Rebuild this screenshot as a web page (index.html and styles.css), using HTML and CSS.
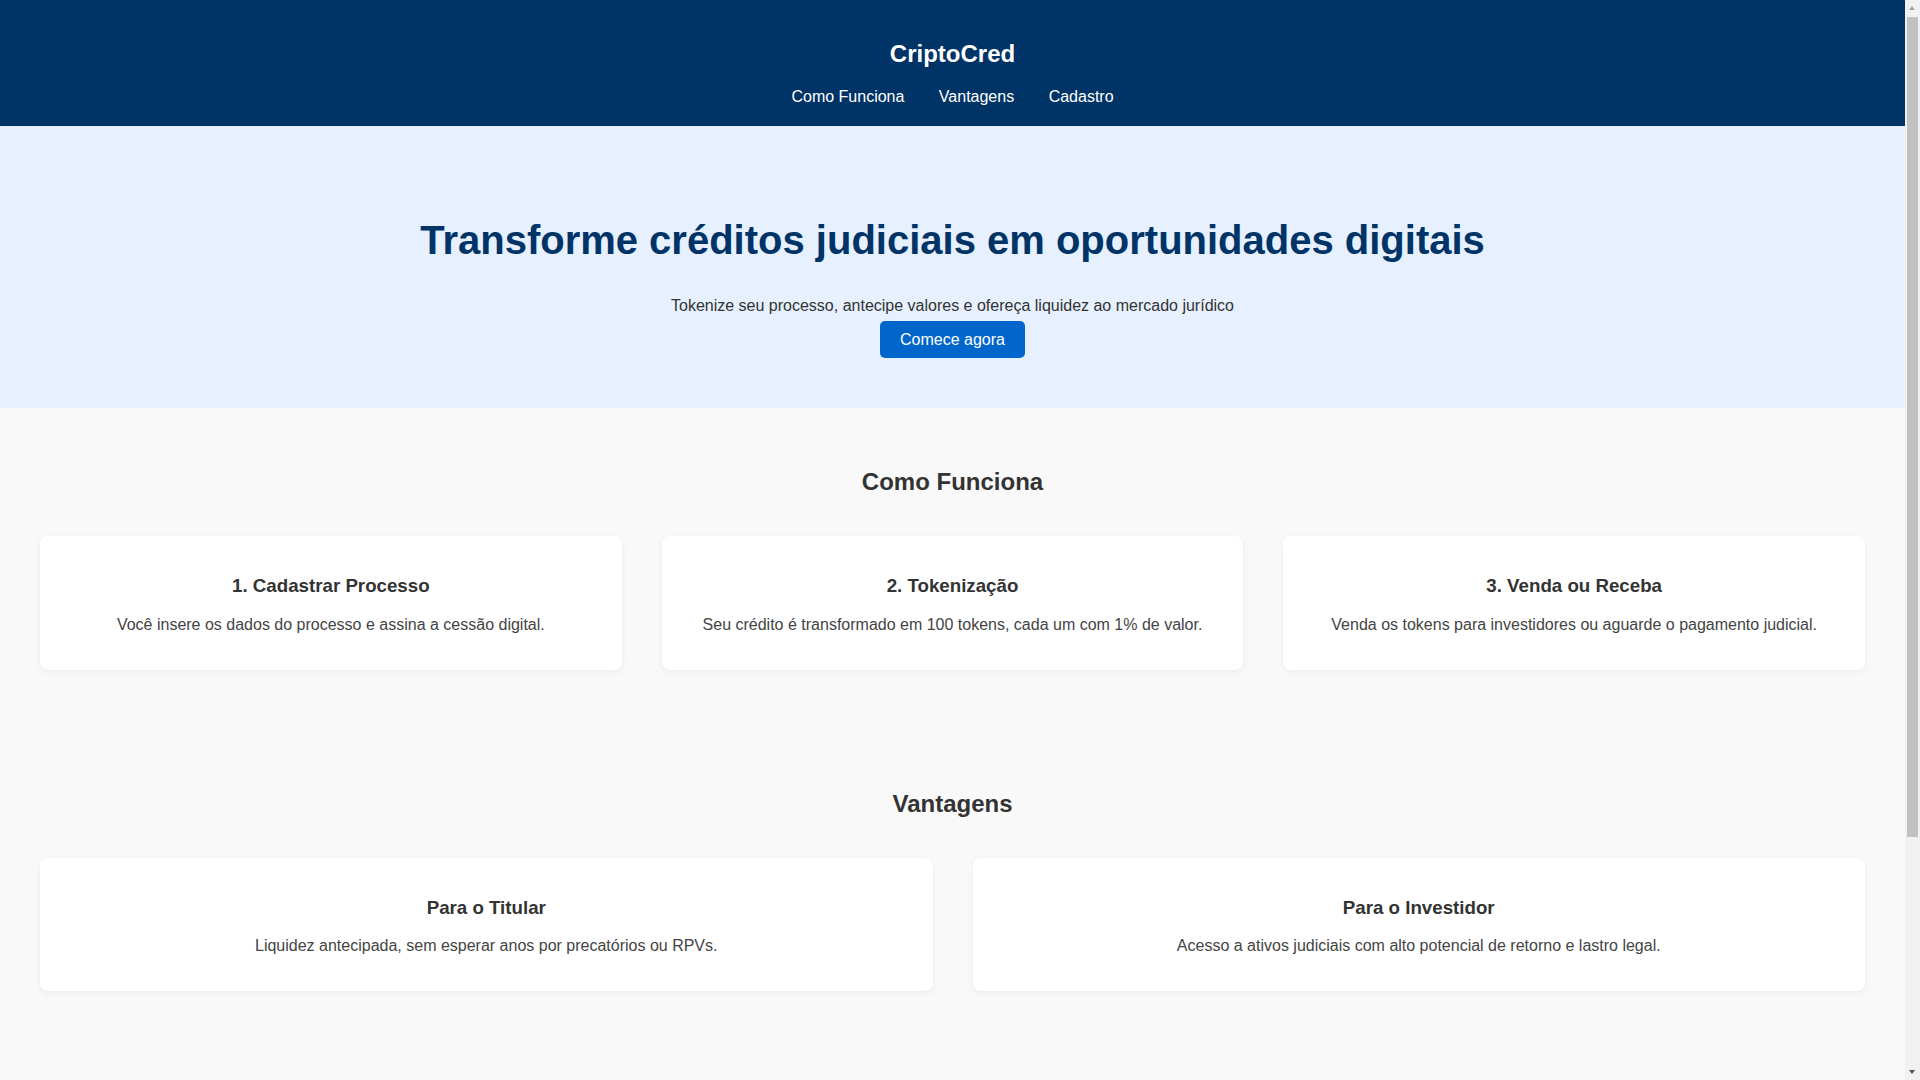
FILE: index.html
```html
<!DOCTYPE html>
<html lang="pt-BR">
<head>
<meta charset="UTF-8">
<title>CriptoCred</title>
<link rel="stylesheet" href="styles.css">
</head>
<body>
<header class="site-header">
  <h1 class="brand">CriptoCred</h1>
  <nav class="nav">
    <a href="#como">Como Funciona</a>
    <a href="#vantagens">Vantagens</a>
    <a href="#cadastro">Cadastro</a>
  </nav>
</header>

<section class="hero">
  <h1 class="hero-title">Transforme créditos judiciais em oportunidades digitais</h1>
  <p class="hero-sub">Tokenize seu processo, antecipe valores e ofereça liquidez ao mercado jurídico</p>
  <a class="btn" href="#cadastro">Comece agora</a>
</section>

<section class="section" id="como">
  <h2 class="section-title">Como Funciona</h2>
  <div class="grid grid-3">
    <div class="card">
      <h3>1. Cadastrar Processo</h3>
      <p>Você insere os dados do processo e assina a cessão digital.</p>
    </div>
    <div class="card">
      <h3>2. Tokenização</h3>
      <p>Seu crédito é transformado em 100 tokens, cada um com 1% de valor.</p>
    </div>
    <div class="card">
      <h3>3. Venda ou Receba</h3>
      <p>Venda os tokens para investidores ou aguarde o pagamento judicial.</p>
    </div>
  </div>
</section>

<section class="section" id="vantagens">
  <h2 class="section-title">Vantagens</h2>
  <div class="grid grid-2">
    <div class="card">
      <h3>Para o Titular</h3>
      <p>Liquidez antecipada, sem esperar anos por precatórios ou RPVs.</p>
    </div>
    <div class="card">
      <h3>Para o Investidor</h3>
      <p>Acesso a ativos judiciais com alto potencial de retorno e lastro legal.</p>
    </div>
  </div>
</section>

<section class="section" id="cadastro">
  <h2 class="section-title">Cadastro</h2>
  <form class="form">
    <input class="input" type="text" placeholder="Nome completo">
    <input class="input" type="email" placeholder="E-mail">
    <button class="btn" type="button">Enviar</button>
  </form>
</section>

<div class="scrollbar" aria-hidden="true">
  <div class="sb-arrow sb-up"></div>
  <div class="sb-track"><div class="sb-thumb"></div></div>
  <div class="sb-arrow sb-down"></div>
</div>
</body>
</html>
```

FILE: styles.css
```css
html, body {
  margin: 0;
  padding: 0;
}

body {
  font-family: "Liberation Sans", Arial, sans-serif;
  font-size: 16px;
  background: #f9f9f9;
  color: #333;
  margin-right: 15px;
}

.site-header {
  background: #003366;
  color: #fff;
  text-align: center;
  padding: 20px;
}

.brand {
  font-size: 24px;
  font-weight: bold;
  margin: 20px 0 20px;
}

.nav a {
  color: #fff;
  text-decoration: none;
  margin: 0 15px;
}

.hero {
  background: #e6f0ff;
  text-align: center;
  padding: 92px 20px 50px;
}

.hero-title {
  font-size: 40px;
  font-weight: bold;
  color: #003366;
  margin: 0 0 34px;
}

.hero-sub {
  margin: 0 0 6px;
  color: #333;
}

.btn {
  display: inline-block;
  background: #0066cc;
  color: #fff;
  text-decoration: none;
  font-family: "Liberation Sans", Arial, sans-serif;
  font-size: 16px;
  line-height: 18.4px;
  padding: 9.5px 20px;
  border: none;
  border-radius: 5px;
}

.section {
  padding: 60px 40px;
  text-align: center;
}

.section-title {
  font-size: 24px;
  margin: 0 0 40px;
  color: #333;
}

.grid {
  display: grid;
  gap: 40px;
}

.grid-3 {
  grid-template-columns: repeat(3, 1fr);
}

.grid-2 {
  grid-template-columns: repeat(2, 1fr);
}

.card {
  background: #fff;
  border-radius: 8px;
  padding: 20px;
  box-shadow: 0 2px 6px rgba(0, 0, 0, 0.06);
}

.card h3 {
  font-size: 18.72px;
  margin: 18.72px 0;
  color: #333;
}

.card p {
  margin: 0 0 16px;
  color: #444;
}

.form {
  display: flex;
  flex-direction: column;
  align-items: center;
  gap: 12px;
}

.input {
  width: 400px;
  padding: 8px 10px;
  font-family: "Liberation Sans", Arial, sans-serif;
  font-size: 14px;
  border: 1px solid #ccc;
  border-radius: 4px;
}

/* fake classic scrollbar (headless hides the real one) */
.scrollbar {
  position: fixed;
  top: 0;
  right: 0;
  width: 15px;
  height: 100vh;
  background: #f1f1f1;
  display: flex;
  flex-direction: column;
}

.sb-arrow {
  height: 17px;
  flex: none;
  position: relative;
}

.sb-arrow::after {
  content: "";
  position: absolute;
  left: 4px;
  width: 0;
  height: 0;
  border-left: 3.5px solid transparent;
  border-right: 3.5px solid transparent;
}

.sb-up::after {
  top: 6px;
  border-bottom: 4px solid #a3a3a3;
}

.sb-down::after {
  top: 7px;
  border-top: 4px solid #505050;
}

.sb-track {
  flex: 1;
  padding: 0 2px;
}

.sb-thumb {
  height: 820px;
  background: #c1c1c1;
}
```
